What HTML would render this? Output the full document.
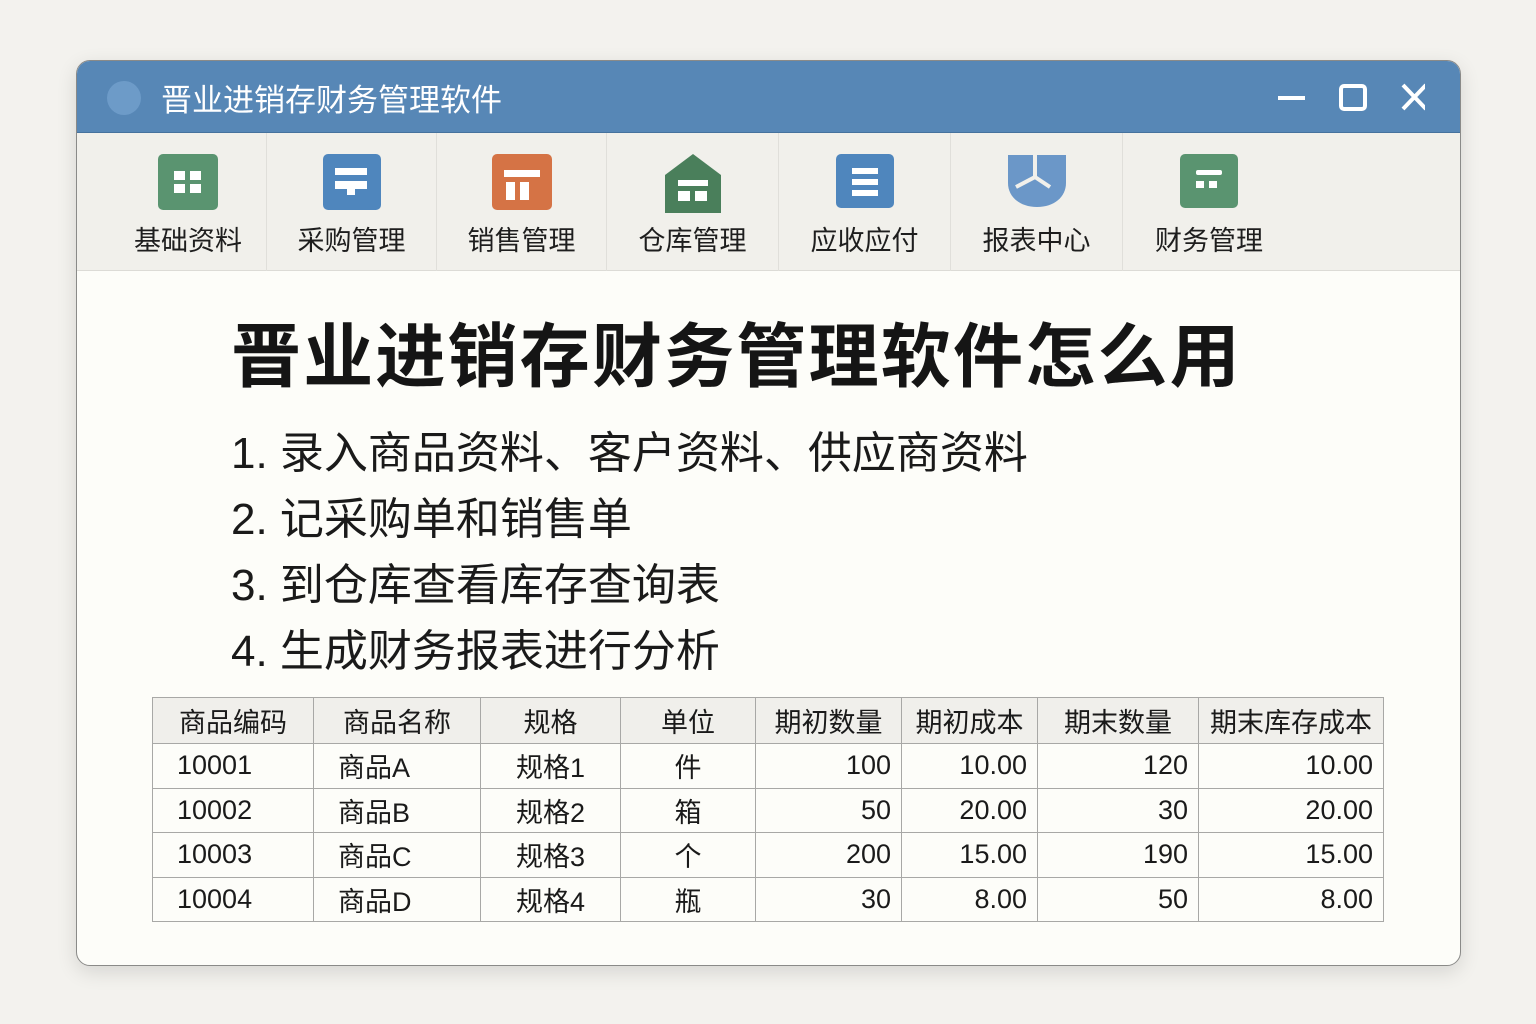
<!DOCTYPE html>
<html><head><meta charset="utf-8"><style>
*{margin:0;padding:0;box-sizing:border-box}
body{width:1536px;height:1024px;background:#f3f2ee;font-family:"Liberation Sans","Noto Sans CJK SC",sans-serif;position:relative;overflow:hidden;color:#1a1a1a}
.win{position:absolute;left:76px;top:60px;width:1385px;height:906px;border-radius:14px;background:#fdfdf9;border:1.5px solid #8a8a88;overflow:hidden;box-shadow:0 6px 20px rgba(0,0,0,.12)}
.title{position:absolute;left:0;top:0;width:100%;height:72px;background:#5787b6;border-bottom:1px solid #46729d}
.title .dot{position:absolute;left:30px;top:20px;width:34px;height:34px;border-radius:50%;background:#6d9bc8}
.title .t{position:absolute;left:84px;top:14px;font-size:31px;color:#fff}
.tb{position:absolute;left:0;top:72px;width:100%;height:138px;background:#f1f0eb;border-bottom:1px solid #dcdbd6}
.tool{position:absolute;top:0;height:138px;border-right:1.5px solid #e0dfda;text-align:center}
.tool .lab{position:absolute;left:0;right:0;top:86px;font-size:27px;color:#1e1e1e}
.tool svg{position:absolute;top:20px;left:50%;transform:translateX(-50%)}
h1{position:absolute;left:154px;top:240px;font-size:70px;font-weight:bold;letter-spacing:2.2px;color:#151515}
.li{position:absolute;left:154px;font-size:44px;color:#1a1a1a}
table{position:absolute;left:75px;top:636px;border-collapse:collapse;font-size:27px}
td,th{border:1.5px solid #a8a8a6;height:44.5px;padding:0 10px;font-weight:normal}
th{background:#f0efeb;height:46px}
td.r{text-align:right}td.c{text-align:center}
</style></head><body>
<div class="win">
 <div class="title"><div class="dot"></div><div class="t">晋业进销存财务管理软件</div>
  <svg style="position:absolute;left:1198px;top:20px" width="150" height="34" viewBox="0 0 150 34"><path d="M3 17H30" stroke="#fff" stroke-width="4"/><rect x="66" y="5" width="24" height="23" rx="3" fill="none" stroke="#fff" stroke-width="4"/><path d="M131 4L154 28M154 4L131 28" stroke="#fff" stroke-width="4" transform="translate(-3,0)"/></svg>
 </div>
 <div class="tb">
  <div class="tool" style="left:0;width:190px"><div style="position:absolute;left:16px;width:190px;height:138px"><svg width="62" height="58" viewBox="0 0 62 58"><rect x="1" y="1" width="60" height="56" rx="5" fill="#5a9470"/><rect x="17" y="18" width="11" height="9" fill="#fff"/><rect x="33" y="18" width="11" height="9" fill="#fff"/><rect x="17" y="31" width="11" height="9" fill="#fff"/><rect x="33" y="31" width="11" height="9" fill="#fff"/></svg><div class="lab">基础资料</div></div></div>
  <div class="tool" style="left:190px;width:170px"><svg width="60" height="58" viewBox="0 0 60 58"><rect x="1" y="1" width="58" height="56" rx="5" fill="#4f86bd"/><rect x="13" y="15" width="32" height="7" fill="#fff"/><path d="M13 28H45V36H33V42H25V36H13Z" fill="#fff"/></svg><div class="lab">采购管理</div></div>
  <div class="tool" style="left:360px;width:170px"><svg width="62" height="58" viewBox="0 0 62 58"><rect x="1" y="1" width="60" height="56" rx="5" fill="#d57345"/><rect x="13" y="17" width="36" height="7" fill="#fff"/><rect x="15" y="29" width="9" height="18" fill="#fff"/><rect x="29" y="29" width="9" height="18" fill="#fff"/></svg><div class="lab">销售管理</div></div>
  <div class="tool" style="left:530px;width:172px"><svg width="60" height="62" viewBox="0 0 60 62"><path d="M30 1L58 22V60H2V22Z" fill="#4a7f5b"/><rect x="15" y="27" width="30" height="6" fill="#fff"/><rect x="15" y="38" width="12" height="10" fill="#fff"/><rect x="32" y="38" width="12" height="10" fill="#fff"/></svg><div class="lab">仓库管理</div></div>
  <div class="tool" style="left:702px;width:172px"><svg width="60" height="56" viewBox="0 0 60 56"><rect x="1" y="1" width="58" height="54" rx="5" fill="#4f86bd"/><rect x="17" y="15" width="26" height="6" fill="#fff"/><rect x="17" y="26" width="26" height="6" fill="#fff"/><rect x="17" y="37" width="26" height="6" fill="#fff"/></svg><div class="lab">应收应付</div></div>
  <div class="tool" style="left:874px;width:172px"><svg width="62" height="56" viewBox="0 0 62 56"><path d="M2 2H60V30C60 44 48 54 31 54C14 54 2 44 2 30Z" fill="#6b97c8"/><path d="M29 2V24L10 34M29 24L44 34" stroke="#f1f0eb" stroke-width="4" fill="none"/></svg><div class="lab">报表中心</div></div>
  <div class="tool" style="left:1046px;width:172px;border:none"><svg width="60" height="56" viewBox="0 0 60 56"><rect x="1" y="1" width="58" height="54" rx="5" fill="#5a9470"/><rect x="17" y="17" width="26" height="5" rx="2" fill="#fff"/><rect x="17" y="28" width="8" height="7" fill="#fff"/><rect x="30" y="28" width="8" height="7" fill="#fff"/></svg><div class="lab">财务管理</div></div>
 </div>
 <h1>晋业进销存财务管理软件怎么用</h1>
 <div class="li" style="top:356px">1. 录入商品资料、客户资料、供应商资料</div>
 <div class="li" style="top:422px">2. 记采购单和销售单</div>
 <div class="li" style="top:488px">3. 到仓库查看库存查询表</div>
 <div class="li" style="top:554px">4. 生成财务报表进行分析</div>
 <table>
  <tr><th style="width:161px">商品编码</th><th style="width:167px">商品名称</th><th style="width:140px">规格</th><th style="width:135px">单位</th><th style="width:146px">期初数量</th><th style="width:136px">期初成本</th><th style="width:161px">期末数量</th><th style="width:185px">期末库存成本</th></tr>
  <tr><td style="padding-left:24px">10001</td><td style="padding-left:24px">商品A</td><td class="c">规格1</td><td class="c">件</td><td class="r">100</td><td class="r">10.00</td><td class="r">120</td><td class="r">10.00</td></tr>
  <tr><td style="padding-left:24px">10002</td><td style="padding-left:24px">商品B</td><td class="c">规格2</td><td class="c">箱</td><td class="r">50</td><td class="r">20.00</td><td class="r">30</td><td class="r">20.00</td></tr>
  <tr><td style="padding-left:24px">10003</td><td style="padding-left:24px">商品C</td><td class="c">规格3</td><td class="c">个</td><td class="r">200</td><td class="r">15.00</td><td class="r">190</td><td class="r">15.00</td></tr>
  <tr><td style="padding-left:24px">10004</td><td style="padding-left:24px">商品D</td><td class="c">规格4</td><td class="c">瓶</td><td class="r">30</td><td class="r">8.00</td><td class="r">50</td><td class="r">8.00</td></tr>
 </table>
</div>
</body></html>
